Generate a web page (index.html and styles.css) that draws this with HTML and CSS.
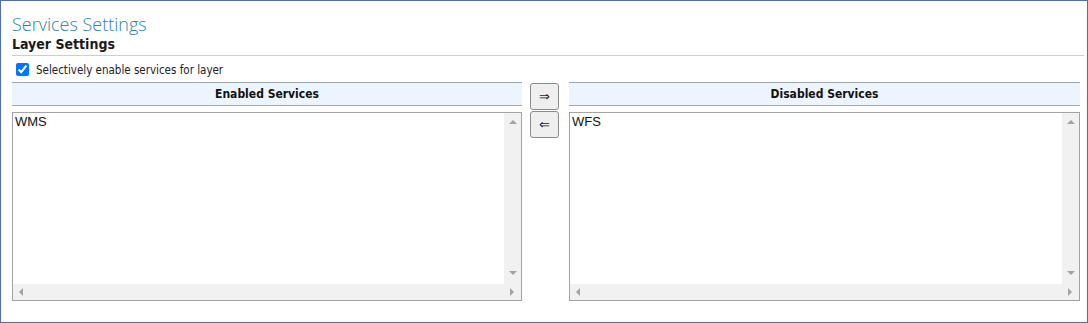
FILE: index.html
```html
<!DOCTYPE html>
<html lang="en">

<head>
	<meta charset="UTF-8">
	<meta name="viewport" content="width=device-width, initial-scale=1.0">
	<title>Services Settings</title>

	<link rel="stylesheet" href="styles.css">
</head>

<body>
	<div class="panel">
		<h1 class="title">Services Settings</h1>
		<h2 class="section">Layer Settings</h2>

		<div class="option">
			<input type="checkbox" id="selective" checked>
			<label for="selective">Selectively enable services for layer</label>
		</div>

		<div class="services">
			<div class="column">
				<div class="head">Enabled Services</div>
				<div class="list">
					<div class="items">
						<div class="item">WMS</div>
					</div>
					<div class="vbar"><span class="arr up"></span><span class="arr down"></span></div>
					<div class="hbar"><span class="arr left"></span><span class="arr right"></span></div>
				</div>
			</div>

			<div class="moves">
				<button type="button" class="butn">&rArr;</button>
				<button type="button" class="butn">&lArr;</button>
			</div>

			<div class="column">
				<div class="head">Disabled Services</div>
				<div class="list">
					<div class="items">
						<div class="item">WFS</div>
					</div>
					<div class="vbar"><span class="arr up"></span><span class="arr down"></span></div>
					<div class="hbar"><span class="arr left"></span><span class="arr right"></span></div>
				</div>
			</div>
		</div>
	</div>
</body>

</html>
```

FILE: styles.css
```css
body {
	margin: 0;
	background-color: #ffffff;
	font-family: "DejaVu Sans Condensed", "DejaVu Sans", sans-serif;
	font-stretch: condensed;
}

.panel {
	box-sizing: border-box;
	width: 1088px;
	height: 323px;
	border: 1px solid #4f6f9f;
	padding: 11px 8px 0 11px;
}

.title {
	margin: 0;
	font-family: "Open Sans", sans-serif;
	font-stretch: normal;
	font-weight: 300;
	font-size: 18px;
	line-height: 24px;
	color: #2f84a8;
}

.section {
	margin: 0 -5px 0 0;
	padding-bottom: 2px;
	font-size: 14px;
	line-height: 17px;
	font-weight: bold;
	color: #1a1a1a;
	border-bottom: 1px solid #cdd0c4;
}

.option {
	display: flex;
	align-items: center;
	height: 19px;
	margin-top: 4px;
	font-size: 11.5px;
	color: #222222;
}

.option input {
	margin: 3px 7px 3px 4px;
	width: 13px;
	height: 13px;
}

.services {
	display: grid;
	grid-template-columns: 510px 47px 511px;
	margin-top: 3px;
}

.column {
	display: flex;
	flex-direction: column;
	gap: 6px;
}

.head {
	height: 22px;
	line-height: 22px;
	background-color: #ecf5fd;
	border-top: 1px solid #9ea6ae;
	border-bottom: 1px solid #9ea6ae;
	text-align: center;
	font-size: 12px;
	font-weight: bold;
	color: #111111;
}

.list {
	height: 187px;
	border: 1px solid #a3a3a3;
	display: grid;
	grid-template-columns: 1fr 17px;
	grid-template-rows: 1fr 16px;
	font-family: "Liberation Sans", Arial, sans-serif;
	font-size: 13px;
	color: #111111;
}

.item {
	padding: 1px 2px 0 2px;
	line-height: 15px;
}

/* fake scrollbars, nothing to scroll */
.vbar {
	background: #f1f1f1;
	display: flex;
	flex-direction: column;
	justify-content: space-between;
	align-items: center;
	padding: 7px 0 9px;
}

.hbar {
	grid-column: 1 / 3;
	background: #f1f1f1;
	display: flex;
	justify-content: space-between;
	align-items: center;
	padding: 0 7px 0 6px;
}

.arr {
	width: 0;
	height: 0;
	border: 4px solid transparent;
}

.up {
	border-top: 0;
	border-bottom: 4px solid #a3a3a3;
}

.down {
	border-bottom: 0;
	border-top: 4px solid #a3a3a3;
}

.left {
	border-left: 0;
	border-right: 4px solid #a3a3a3;
}

.right {
	border-right: 0;
	border-left: 4px solid #a3a3a3;
}

.moves {
	display: flex;
	flex-direction: column;
	gap: 1px;
	padding: 1px 0 0 8px;
}

.butn {
	width: 29px;
	height: 27px;
	padding: 0;
	background: #efefef;
	border: 1px solid #8a8a8a;
	border-radius: 3px;
	font-family: "DejaVu Sans", sans-serif;
	font-stretch: normal;
	font-size: 13px;
	color: #222222;
}
```
